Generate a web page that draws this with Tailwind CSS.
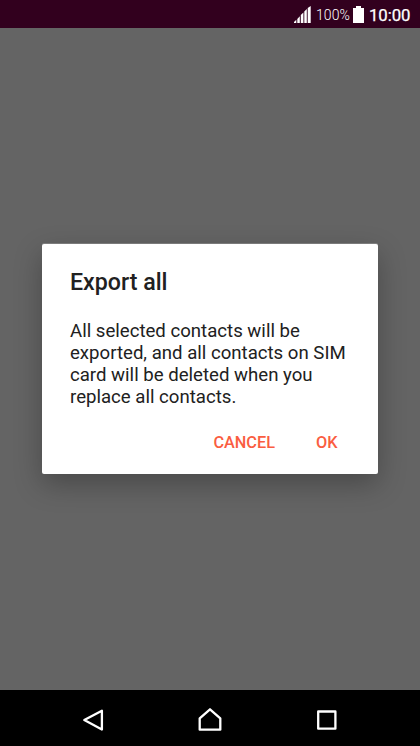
<!DOCTYPE html>
<html lang="en">
<head>
<meta charset="utf-8">
<title>Export all</title>
<script src="https://cdn.jsdelivr.net/npm/@tailwindcss/browser@4"></script>
</head>
<body class="flex h-screen w-screen flex-col overflow-hidden bg-[#646464] font-['Roboto',sans-serif]">
  <header class="flex h-7 shrink-0 items-center justify-end bg-[#32001e] pt-px pr-[9px] text-white">
    <svg class="mr-[5px] h-[17px] w-[17px]" viewBox="0 0 17 17" fill="currentColor"><path d="M0 17v-1l2.300-2.300V17zM3.300 17v-4l2.500-2.700V17zM6.800 17V9l2.600-2.500V17zM10.300 17V5.500l2.500-2.500v14zM13.700 17V2L16.700 0v17z"/></svg>
    <span class="mr-[3px] text-[14px] leading-4 font-light tracking-[0.1px] pt-px">100%</span>
    <svg class="mr-[5px] mb-px h-[17px] w-[11px]" viewBox="0 0 11 17" fill="currentColor"><path d="M3 0h5v2h3v15H0V2h3z"/></svg>
    <span class="w-[42px] text-[16.8px] leading-5 tracking-[-0.1px] whitespace-nowrap [-webkit-text-stroke:0.25px_white]">10:00</span>
  </header>
  <main class="flex grow items-center justify-center">
    <section class="h-[230px] w-[336px] rounded-[2px] bg-white px-7 pt-[25px] text-[#212121] shadow-[0_10px_28px_rgba(0,0,0,0.28),0_-1px_0_rgba(255,255,255,0.2)]">
      <h1 class="text-[23.2px] leading-[27px] font-medium">Export all</h1>
      <p class="mt-[24px] text-[18.63px] leading-[22.1px] whitespace-nowrap">All selected contacts will be<br>exported, and all contacts on SIM<br>card will be deleted when you<br>replace all contacts.</p>
      <div class="mt-[25px] flex justify-end gap-[41px] pr-[12.5px] text-[16.3px] leading-[20px] font-medium text-[#fa5d41]"><button>CANCEL</button><button>OK</button></div>
    </section>
  </main>
  <nav class="flex h-14 shrink-0 items-center justify-center gap-[93px] bg-black pt-[4px] text-white">
    <svg class="size-6" viewBox="0 0 24 24" fill="none" stroke="currentColor" stroke-width="2.3" stroke-linejoin="round"><path d="M20.900 2.700v18.800L3.300 12.100z"/></svg>
    <svg class="size-6" viewBox="0 0 24 24" fill="none" stroke="currentColor" stroke-width="2.3" stroke-linejoin="round"><path d="M1.700 21.700V10.300L12 1.300l10.300 9v11.400z"/></svg>
    <svg class="size-6" viewBox="0 0 24 24" fill="none" stroke="currentColor" stroke-width="2.3" stroke-linejoin="round"><path d="M3.200 3.500h17.200v17.200H3.200z"/></svg>
  </nav>
</body>
</html>
